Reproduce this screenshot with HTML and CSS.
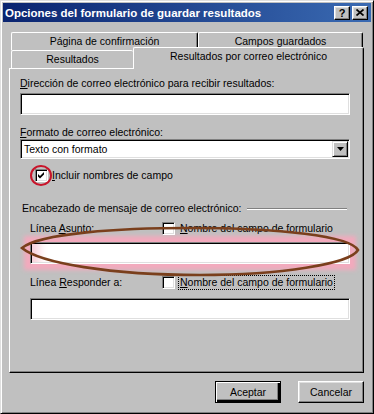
FILE: index.html
```html
<!DOCTYPE html>
<html lang="es">
<head>
    <meta charset="UTF-8">
    <meta name="viewport" content="width=device-width, initial-scale=1.0">
    <title>Opciones del formulario de guardar resultados</title>
    <link rel="stylesheet" href="styles.css">
</head>
<body>
    <div class="window">
        <div class="titlebar">
            <span class="title">Opciones del formulario de guardar resultados</span>
            <div class="title-buttons">
                <button class="tbtn help">?</button>
                <button class="tbtn close">
                    <svg width="8" height="7" viewBox="0 0 8 7"><path d="M0.5 0.5 L7.5 6.5 M7.5 0.5 L0.5 6.5" stroke="#000" stroke-width="1.7"/></svg>
                </button>
            </div>
        </div>
        <div class="content">
            <div class="tabs">
                <div class="tab-row back">
                    <div class="tab tab-confirm">Página de confirmación</div>
                    <div class="tab tab-fields">Campos guardados</div>
                </div>
                <div class="tab-row front">
                    <div class="tab tab-results">Resultados</div>
                    <div class="tab tab-email">Resultados por correo electrónico</div>
                </div>
            </div>
            <div class="panel">
                <div class="label"><u>D</u>irección de correo electrónico para recibir resultados:</div>
                <div class="field field-address"></div>
                <div class="label label-format"><u>F</u>ormato de correo electrónico:</div>
                <div class="select">
                    <span class="select-value">Texto con formato</span>
                    <span class="select-arrow">
                        <svg width="7" height="4" viewBox="0 0 7 4"><polygon points="0,0 7,0 3.5,4" fill="#000"/></svg>
                    </span>
                </div>
                <div class="check-row">
                    <span class="checkbox">
                        <svg width="11" height="11" viewBox="0 0 11 11"><polygon points="2,4 4,6 8,2 8,4.5 4,8.5 2,6.5" fill="#000"/></svg>
                    </span>
                    <span><u>I</u>ncluir nombres de campo</span>
                    <span class="mark-circle"></span>
                </div>
                <div class="group">
                    <div class="group-title">
                        <span>Encabezado de mensaje de correo electrónico:</span>
                        <span class="etched"></span>
                    </div>
                    <div class="option-row subject">
                        <span class="option-label">Línea <u>A</u>sunto:</span>
                        <span class="checkbox"></span>
                        <span class="option-text"><u>N</u>ombre del campo de formulario</span>
                    </div>
                    <div class="field field-subject"></div>
                    <div class="option-row reply">
                        <span class="option-label">Línea <u>R</u>esponder a:</span>
                        <span class="checkbox"></span>
                        <span class="option-text focus"><u>N</u>ombre del campo de formulario</span>
                    </div>
                    <div class="field field-reply"></div>
                </div>
                <!-- hand-drawn mark around the subject field -->
                <svg class="ellipse-mark" viewBox="9 68 355 305">
                    <path d="M22 248 C40 233 120 228 190 228 C280 228 350 236 358 250 C350 264 280 275 200 275 C110 275 40 263 22 248 Z" fill="none" stroke="#7a3f1c" stroke-width="2.6"/>
                </svg>
            </div>
            <div class="dialog-buttons">
                <button class="button default">Aceptar</button>
                <button class="button">Cancelar</button>
            </div>
        </div>
    </div>
</body>
</html>
```

FILE: styles.css
```css
* {
    box-sizing: border-box;
}
body {
    margin: 0;
    background-color: #c0c0c0;
    font-family: "Liberation Sans", Arial, sans-serif;
    font-size: 10.5px;
    color: #000;
}
u {
    text-decoration-thickness: 1px;
    text-underline-offset: 1px;
}
.window {
    width: 374px;
    height: 414px;
    padding: 2px;
    border: 1px solid;
    border-color: #dfdfdf #000 #000 #dfdfdf;
    box-shadow: inset 1px 1px #fff, inset -1px -1px #808080;
    background-color: #c0c0c0;
}
.titlebar {
    height: 19px;
    display: flex;
    align-items: center;
    justify-content: space-between;
    padding: 0 3px 0 2px;
    background: linear-gradient(90deg, #0a2470, #3a6ab2);
}
.title {
    color: #fff;
    font-weight: bold;
    font-size: 11.5px;
}
.title-buttons {
    display: flex;
    gap: 2px;
}
.tbtn {
    width: 16px;
    height: 14px;
    padding: 0;
    display: flex;
    align-items: center;
    justify-content: center;
    background-color: #c0c0c0;
    border: 1px solid;
    border-color: #fff #000 #000 #fff;
    box-shadow: inset -1px -1px #808080, inset 1px 1px #dfdfdf;
    font-family: "Liberation Sans", Arial, sans-serif;
    font-weight: bold;
    font-size: 11px;
    line-height: 12px;
    color: #000;
}
.content {
    padding: 10px 7px 0 6px;
}
.tab-row {
    display: flex;
    position: relative;
}
.tab-row.back {
    padding-left: 2px;
    margin-bottom: -3px;
    z-index: 0;
}
.tab-row.front {
    padding-left: 2px;
    align-items: flex-end;
    z-index: 2;
}
.tab {
    height: 18px;
    padding-top: 2px;
    line-height: 13px;
    text-align: center;
    background-color: #c0c0c0;
    border-top: 1px solid #fff;
    border-left: 1px solid #fff;
    border-right: 1px solid #000;
    border-radius: 2px 2px 0 0;
    box-shadow: inset -1px 0 #808080;
}
.tab-confirm {
    width: 187px;
}
.tab-fields {
    width: 165px;
}
.tab-results {
    width: 122px;
    border-right: none;
    box-shadow: none;
}
.tab-email {
    width: 231px;
    height: 22px;
    margin-bottom: -1px;
}
.panel {
    position: relative;
    height: 305px;
    padding: 8px 13px 0 10px;
    border: 1px solid;
    border-color: #fff #000 #000 #fff;
    box-shadow: inset -1px -1px #808080;
}
.label {
    line-height: 13px;
}
.label-format {
    margin-top: 11px;
}
.field {
    height: 22px;
    background-color: #fff;
    border: 1px solid;
    border-color: #808080 #fff #fff #808080;
    box-shadow: inset 1px 1px #000, inset -1px -1px #dfdfdf;
}
.field-address {
    margin-top: 3px;
}
.select {
    height: 20px;
    display: flex;
    align-items: center;
    padding: 1px 1px 1px 2px;
    background-color: #fff;
    border: 1px solid;
    border-color: #808080 #fff #fff #808080;
    box-shadow: inset 1px 1px #000, inset -1px -1px #dfdfdf;
}
.select-value {
    flex: 1;
    padding-left: 1px;
    line-height: 13px;
}
.select-arrow {
    width: 16px;
    height: 16px;
    display: flex;
    align-items: center;
    justify-content: center;
    background-color: #c0c0c0;
    border: 1px solid;
    border-color: #dfdfdf #000 #000 #dfdfdf;
    box-shadow: inset 1px 1px #fff, inset -1px -1px #808080;
}
.check-row {
    position: relative;
    display: flex;
    align-items: center;
    gap: 4px;
    margin-top: 10px;
    padding-left: 15px;
    line-height: 13px;
}
.checkbox {
    width: 13px;
    height: 13px;
    flex: none;
    display: flex;
    background-color: #fff;
    border: 1px solid;
    border-color: #808080 #fff #fff #808080;
    box-shadow: inset 1px 1px #000, inset -1px -1px #dfdfdf;
}
.mark-circle {
    position: absolute;
    left: 10px;
    top: -4px;
    width: 22px;
    height: 21px;
    border: 2px solid #c8142a;
    border-radius: 50%;
}
.group {
    margin-top: 20px;
}
.group-title {
    display: flex;
    align-items: center;
    padding-left: 2px;
    line-height: 13px;
}
.etched {
    flex: 1;
    height: 2px;
    margin: 1px 3px 0 6px;
    border-top: 1px solid #808080;
    border-bottom: 1px solid #fff;
}
.option-row {
    display: flex;
    align-items: center;
    padding-left: 10px;
    line-height: 13px;
}
.option-row.subject {
    margin-top: 6px;
}
.option-row.reply {
    margin-top: 11px;
}
.option-label {
    width: 132px;
}
.option-text {
    margin-left: 3px;
    padding: 0 1px;
    border: 1px solid transparent;
}
.option-text.focus {
    border: 1px dotted #000;
}
.field-subject {
    margin: 6px 0 0 10px;
    box-shadow: inset 1px 1px #000, inset -1px -1px #dfdfdf, inset 14px 0 10px -6px #f8d0da, 0 0 4px 6px #f2aabd;
}
.field-reply {
    margin: 8px 0 0 10px;
}
.ellipse-mark {
    position: absolute;
    left: -1px;
    top: -1px;
    width: 355px;
    height: 305px;
    pointer-events: none;
}
.dialog-buttons {
    display: flex;
    justify-content: flex-end;
    gap: 17px;
    margin-top: 8px;
}
.button {
    width: 66px;
    height: 22px;
    padding: 0;
    background-color: #c0c0c0;
    border: 1px solid;
    border-color: #fff #000 #000 #fff;
    box-shadow: inset -1px -1px #808080, inset 1px 1px #dfdfdf;
    font-family: "Liberation Sans", Arial, sans-serif;
    font-size: 10.5px;
    color: #000;
}
.button.default {
    border: 1px solid #000;
    box-shadow: inset 1px 1px #fff, inset -2px -2px #000, inset -3px -3px #808080;
}
```
